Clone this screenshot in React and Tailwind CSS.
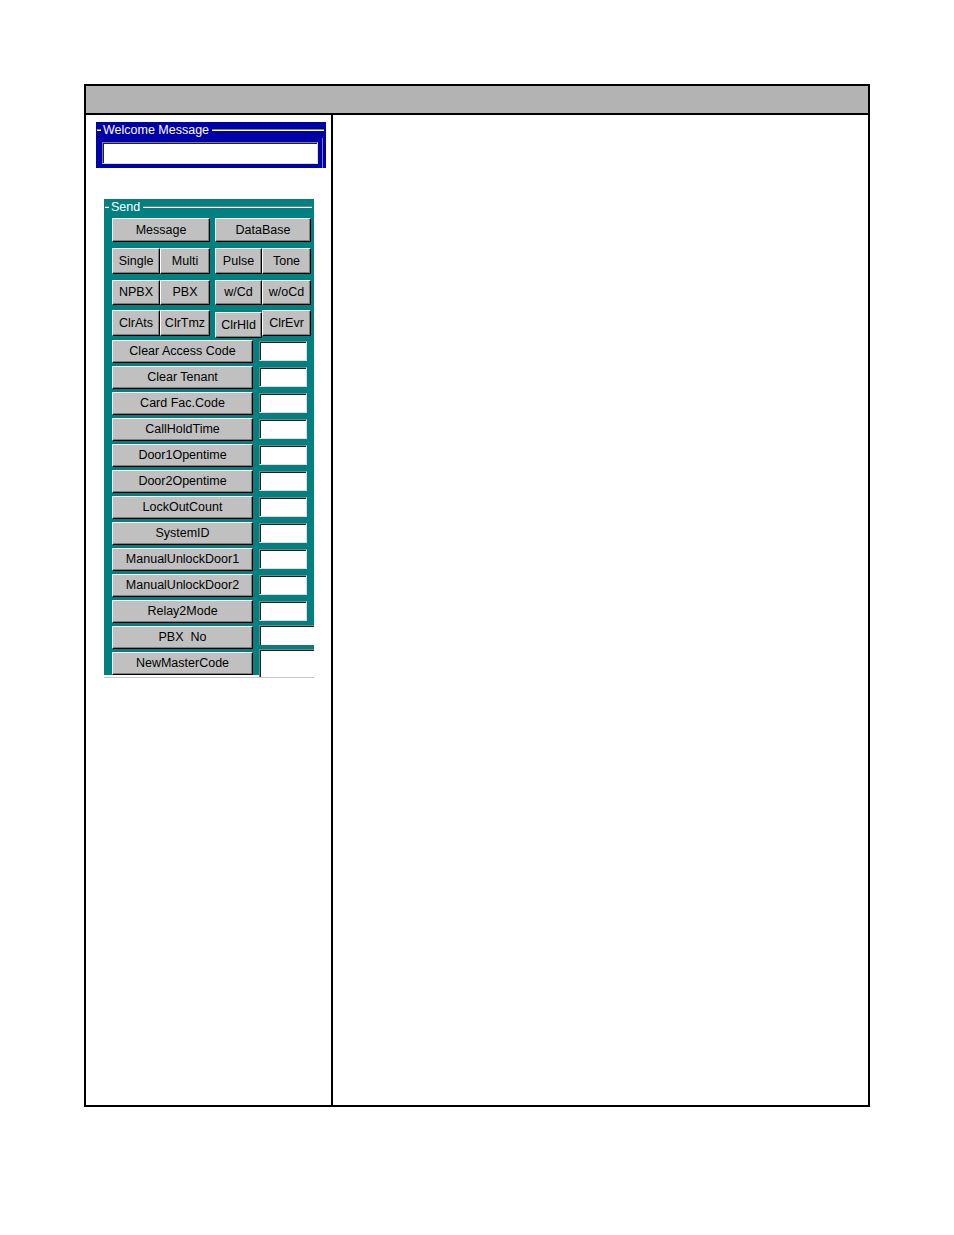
const font = "font-['Liberation_Sans',Arial,sans-serif]";

const Btn = ({ children, className = "" }) => (
  <button
    type="button"
    className={`flex items-center justify-center bg-[#c0c0c0] border border-t-white border-l-white border-r-black border-b-black shadow-[inset_-1px_-1px_0_#808080] text-black text-[12.5px] leading-none whitespace-pre ${className}`}
  >
    {children}
  </button>
);

const Field = ({ className = "" }) => (
  <div
    className={`bg-white border border-t-[#808080] border-l-[#808080] border-r-[#dcdcdc] border-b-[#dcdcdc] shadow-[inset_1px_1px_0_#202020] ${className}`}
  />
);

const GroupTitle = ({ label }) => (
  <div className="flex h-[16px] items-center">
    <div className="ml-[1px] h-[2px] w-[4px] border-t border-[#808080] border-b border-b-white" />
    <span className="pl-[2px] pr-[3px] text-[12.5px] leading-none text-white">{label}</span>
    <div className="mr-[2px] h-[2px] flex-1 border-t border-[#808080] border-b border-b-white" />
  </div>
);

const settings = [
  "Clear Access Code",
  "Clear Tenant",
  "Card Fac.Code",
  "CallHoldTime",
  "Door1Opentime",
  "Door2Opentime",
  "LockOutCount",
  "SystemID",
  "ManualUnlockDoor1",
  "ManualUnlockDoor2",
  "Relay2Mode",
];

const App = () => {
  return (
    <div className={`min-h-[1235px] bg-white pl-[84px] pt-[84px] ${font}`}>
      <div className="flex h-[1023px] w-[786px] flex-col border-2 border-black">
        <div className="h-[29px] border-b-2 border-black bg-[#b3b3b3]" />
        <div className="flex flex-1">
          {/* left column */}
          <div className="w-[247px] border-r-2 border-black">
            {/* Welcome Message */}
            <div className="ml-[10px] mt-[7px] flex h-[46px] w-[230px] flex-col bg-[#0000a8]">
              <GroupTitle label="Welcome Message" />
              <div className="mr-[3px] flex-1 border-r border-[#8080a0] pl-[6px] pr-[4px] pt-[4px]">
                <Field className="h-[22px]" />
              </div>
            </div>

            {/* Send */}
            <div className="ml-[18px] mt-[31px] w-[210px]">
              <div className="flex flex-col bg-[#008080]">
                <GroupTitle label="Send" />
                <div className="mt-[3px] flex pl-[8px]">
                  <Btn className="h-[24px] w-[98px]">Message</Btn>
                  <Btn className="ml-[5px] h-[24px] w-[96px]">DataBase</Btn>
                </div>
                <div className="mt-[6px] flex pl-[8px]">
                  <Btn className="h-[26px] w-[48px]">Single</Btn>
                  <Btn className="h-[26px] w-[50px]">Multi</Btn>
                  <Btn className="ml-[5px] h-[26px] w-[47px]">Pulse</Btn>
                  <Btn className="h-[26px] w-[49px]">Tone</Btn>
                </div>
                <div className="mt-[6px] flex pl-[8px]">
                  <Btn className="h-[25px] w-[48px]">NPBX</Btn>
                  <Btn className="h-[25px] w-[50px]">PBX</Btn>
                  <Btn className="ml-[5px] h-[25px] w-[47px]">w/Cd</Btn>
                  <Btn className="h-[25px] w-[49px]">w/oCd</Btn>
                </div>
                <div className="mt-[5px] flex items-start pl-[8px]">
                  <Btn className="h-[26px] w-[48px]">ClrAts</Btn>
                  <Btn className="h-[26px] w-[50px]">ClrTmz</Btn>
                  <Btn className="ml-[5px] mt-[2px] h-[26px] w-[47px]">ClrHld</Btn>
                  <Btn className="h-[26px] w-[49px]">ClrEvr</Btn>
                </div>
                <div className="mt-[2px] flex flex-col gap-[3px]">
                  {settings.map((s) => (
                    <div key={s} className="flex h-[23px] pl-[8px]">
                      <Btn className="h-[23px] w-[141px]">{s}</Btn>
                      <Field className="ml-[6px] mt-[1px] h-[20px] w-[48px]" />
                    </div>
                  ))}
                  <div className="flex h-[23px] pl-[8px]">
                    <Btn className="h-[23px] w-[141px]">{"PBX  No"}</Btn>
                    <div className="ml-[6px] mt-[-1px] h-[20px] flex-1 border-t border-l border-[#808080] bg-white shadow-[inset_1px_1px_0_#202020]" />
                  </div>
                  <div className="flex h-[23px] pl-[8px]">
                    <Btn className="h-[23px] w-[141px]">NewMasterCode</Btn>
                    <div className="relative z-10 ml-[6px] mt-[-3px] h-[28px] flex-1 border-t border-l border-[#808080] bg-white shadow-[inset_1px_1px_0_#202020]" />
                  </div>
                </div>
              </div>
              <div className="mt-[2px] h-[1px] bg-[#c8c8c8]" />
            </div>
          </div>
          {/* right column */}
          <div className="flex-1" />
        </div>
      </div>
    </div>
  );
};

export default App;
